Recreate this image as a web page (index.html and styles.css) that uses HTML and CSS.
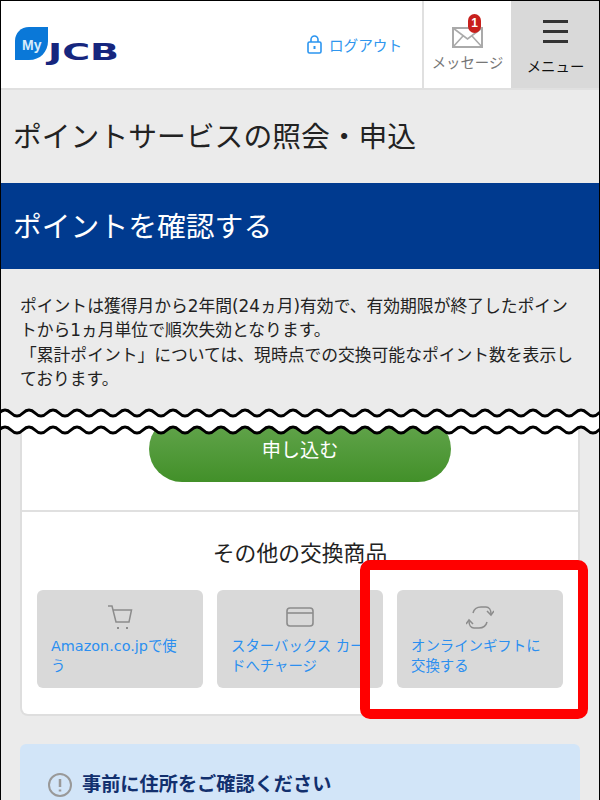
FILE: index.html
```html
<!DOCTYPE html>
<html lang="ja">
<head>
    <meta charset="UTF-8">
    <meta name="viewport" content="width=device-width, initial-scale=1.0">
    <title>ポイントサービスの照会・申込</title>
    <link rel="stylesheet" href="styles.css">
</head>
<body>
    <header class="site-header">
        <a class="logo" href="#">
            <svg width="106" height="42" viewBox="0 0 106 42">
                <path d="M0 33V14C0 6 6 0 14 0H33V14C33 25 25 33 14 33Z" fill="#0a78d8"/>
                <text x="7" y="23" class="logo-my">My</text>
                <text x="33" y="33" class="logo-jcb" textLength="71" lengthAdjust="spacingAndGlyphs">JCB</text>
            </svg>
        </a>
        <a class="logout" href="#">
            <svg width="15" height="19" viewBox="0 0 15 19" fill="none" stroke="#2b95f0" stroke-width="1.6">
                <rect x="1" y="7" width="13" height="11" rx="1.5"/>
                <path d="M4 7V4.5a3.5 3.5 0 0 1 7 0V7"/>
                <path d="M7.5 11v3" stroke-width="2"/>
            </svg>
            <span>ログアウト</span>
        </a>
        <a class="head-cell message" href="#">
            <span class="mail-icon">
                <svg width="31" height="21" viewBox="0 0 31 21" fill="none" stroke="#aaa" stroke-width="2">
                    <rect x="1" y="1" width="29" height="19"/>
                    <path d="M1 1L15.5 12L30 1M1 20L11 9M30 20L20 9" stroke-width="1.6"/>
                </svg>
                <span class="badge">1</span>
            </span>
            <span>メッセージ</span>
        </a>
        <a class="head-cell menu" href="#">
            <span class="bars"><i></i><i></i><i></i></span>
            <span>メニュー</span>
        </a>
    </header>

    <h1 class="page-title">ポイントサービスの照会・申込</h1>
    <h2 class="band">ポイントを確認する</h2>
    <p class="lead">ポイントは獲得月から2年間(24ヵ月)有効で、有効期限が終了したポイントから1ヵ月単位で順次失効となります。<br>「累計ポイント」については、現時点での交換可能なポイント数を表示しております。</p>

    <section class="card">
        <div class="apply-row">
            <button class="apply-btn">申し込む</button>
        </div>
        <div class="other">
            <h3>その他の交換商品</h3>
            <div class="tiles">
                <a class="tile" href="#">
                    <svg width="26" height="25" viewBox="0 0 26 25" fill="none" stroke="#8c8c8c" stroke-width="1.5">
                        <path d="M1 1H5L9 17H22L24.500 5H6"/>
                        <path d="M10 23h2M19 23h2" stroke-width="2"/>
                    </svg>
                    <span>Amazon.co.jpで使う</span>
                </a>
                <a class="tile" href="#">
                    <svg width="28" height="25" viewBox="0 0 28 25" fill="none" stroke="#8c8c8c" stroke-width="1.6">
                        <rect x="1" y="3" width="26" height="18" rx="3"/>
                        <path d="M1 8H27"/>
                    </svg>
                    <span>スターバックス カードへチャージ</span>
                </a>
                <a class="tile" href="#">
                    <svg width="28" height="25" viewBox="0 0 28 25" fill="none" stroke="#8c8c8c" stroke-width="1.5">
                        <path d="M7 8C8 4 11 2 15 2H20C23 2 25 5 25 9"/>
                        <path d="M21 6L25 10L28 6"/>
                        <path d="M21 17C20 21 17 23 13 23H8C5 23 3 20 3 16"/>
                        <path d="M0 19L3 15L7 19"/>
                    </svg>
                    <span>オンラインギフトに交換する</span>
                </a>
            </div>
        </div>
    </section>

    <section class="notice">
        <h3>
            <svg width="24" height="24" viewBox="0 0 24 24" fill="none" stroke="#999" stroke-width="2">
                <circle cx="12" cy="12" r="11"/>
                <path d="M12 6V14M12 16.500V18.500" stroke-width="2.500"/>
            </svg>
            事前に住所をご確認ください
        </h3>
    </section>

    <!-- torn edge and the red highlight sit on top of the page -->
    <svg class="tear" width="600" height="32">
        <defs>
            <pattern id="wave" width="24" height="32" patternUnits="userSpaceOnUse" patternTransform="translate(-7 0)">
                <path d="M0 0H24V11C18 11 18 5 12 5S6 11 0 11Z" fill="#ebebeb"/>
                <path d="M0 11C6 11 6 5 12 5S18 11 24 11V28C18 28 18 22 12 22S6 28 0 28Z" fill="#fff"/>
                <path d="M0 11C6 11 6 5 12 5S18 11 24 11M0 28C6 28 6 22 12 22S18 28 24 28" fill="none" stroke="#000" stroke-width="3"/>
            </pattern>
        </defs>
        <rect width="600" height="32" fill="url(#wave)"/>
    </svg>
    <div class="highlight"></div>
    <div class="frame"></div>
</body>
</html>
```

FILE: styles.css
```css
* { box-sizing: border-box; }
html, body { height: 800px; overflow: hidden; }
body { position: relative; margin: 0; background: #ebebeb; color: #222; font-family: "DejaVu Sans", "Noto Sans CJK JP", sans-serif; }
a { text-decoration: none; }

.site-header { display: flex; align-items: stretch; height: 90px; background: #fff; border-bottom: 2px solid #e0e0e0; }
.logo { display: flex; align-items: flex-start; padding: 0 0 0 15px; margin-top: 27px; height: 42px; }
.logo-my { font: bold 14px "Liberation Sans", sans-serif; fill: #d8ecfb; }
.logo-jcb { font: bold 23px "DejaVu Sans", sans-serif; fill: #16267e; }
.logout { display: flex; align-items: center; gap: 7px; margin-left: auto; margin-right: 20px; color: #2f96ee; font-size: 14.6px; }
.head-cell { display: flex; flex-direction: column; align-items: center; width: 89px; font-size: 14.4px; line-height: 21px; }
.message { width: 89px; border-left: 2px solid #e0e0e0; color: #777; padding-top: 27px; }
.message .mail-icon { margin-bottom: 5px; }
.menu { background: #d9d9d9; color: #111; padding-top: 20px; gap: 14px; }
.mail-icon { position: relative; display: block; width: 31px; height: 21px; }
.mail-icon svg { display: block; }
.badge { position: absolute; left: 16px; top: -13px; width: 13px; height: 19px; border-radius: 7px; background: #c8201c; color: #fff; font: bold 12px/19px "Liberation Sans", sans-serif; text-align: center; }
.bars { display: flex; flex-direction: column; gap: 7px; width: 25px; }
.bars i { display: block; height: 3px; background: #333; }

.page-title { margin: 0; height: 93px; padding-left: 13px; font-size: 28.8px; font-weight: 400; line-height: 94px; }
.band { margin: 0; height: 86px; padding-left: 13px; background: #003a8f; color: #fff; font-size: 28.8px; font-weight: 400; line-height: 88px; }
.lead { margin: 0; height: 137px; padding: 24.500px 20px 0; font-size: 16.8px; line-height: 24.500px; }

.card { margin: 0 20px; height: 310px; background: #fff; border: solid #dedede; border-width: 0 2px 2px; border-radius: 0 0 8px 8px; }
.apply-row { display: flex; justify-content: center; height: 106px; padding-top: 10px; border-bottom: 2px solid #e0e0e0; }
.apply-btn { width: 302px; height: 66px; border: 0; border-radius: 33px; background: linear-gradient(#65a64f, #429029); color: #fff; font: 400 19.2px "Noto Sans CJK JP", sans-serif; }
.other { padding: 0 15px; }
.other h3 { margin: 0; height: 78px; padding-top: 26px; font-size: 21.8px; font-weight: 400; line-height: 32px; text-align: center; }
.tiles { display: flex; gap: 14px; }
.tile { display: flex; flex: 1; flex-direction: column; height: 98px; padding: 15px 14px 0; background: #d9d9d9; border-radius: 6px; color: #2b8ff0; font-size: 14.4px; line-height: 20px; }
.tile svg { display: block; flex: none; align-self: center; margin-bottom: 6px; }

.notice { margin: 28px 20px 0; height: 120px; padding: 26px 28px; background: #d2e5f8; border-radius: 6px 6px 0 0; }
.notice h3 { display: flex; align-items: center; gap: 10px; margin: 0; color: #12306e; font-size: 19.2px; font-weight: 700; line-height: 30px; }

.tear { position: absolute; left: 0; top: 405px; }
.highlight { position: absolute; left: 360px; top: 560px; width: 228px; height: 159px; border: 10px solid #f00; border-radius: 10px; }
.frame { position: absolute; left: 0; top: 0; width: 600px; height: 800px; border: solid #000; border-width: 1px 1px 0; pointer-events: none; }
```
